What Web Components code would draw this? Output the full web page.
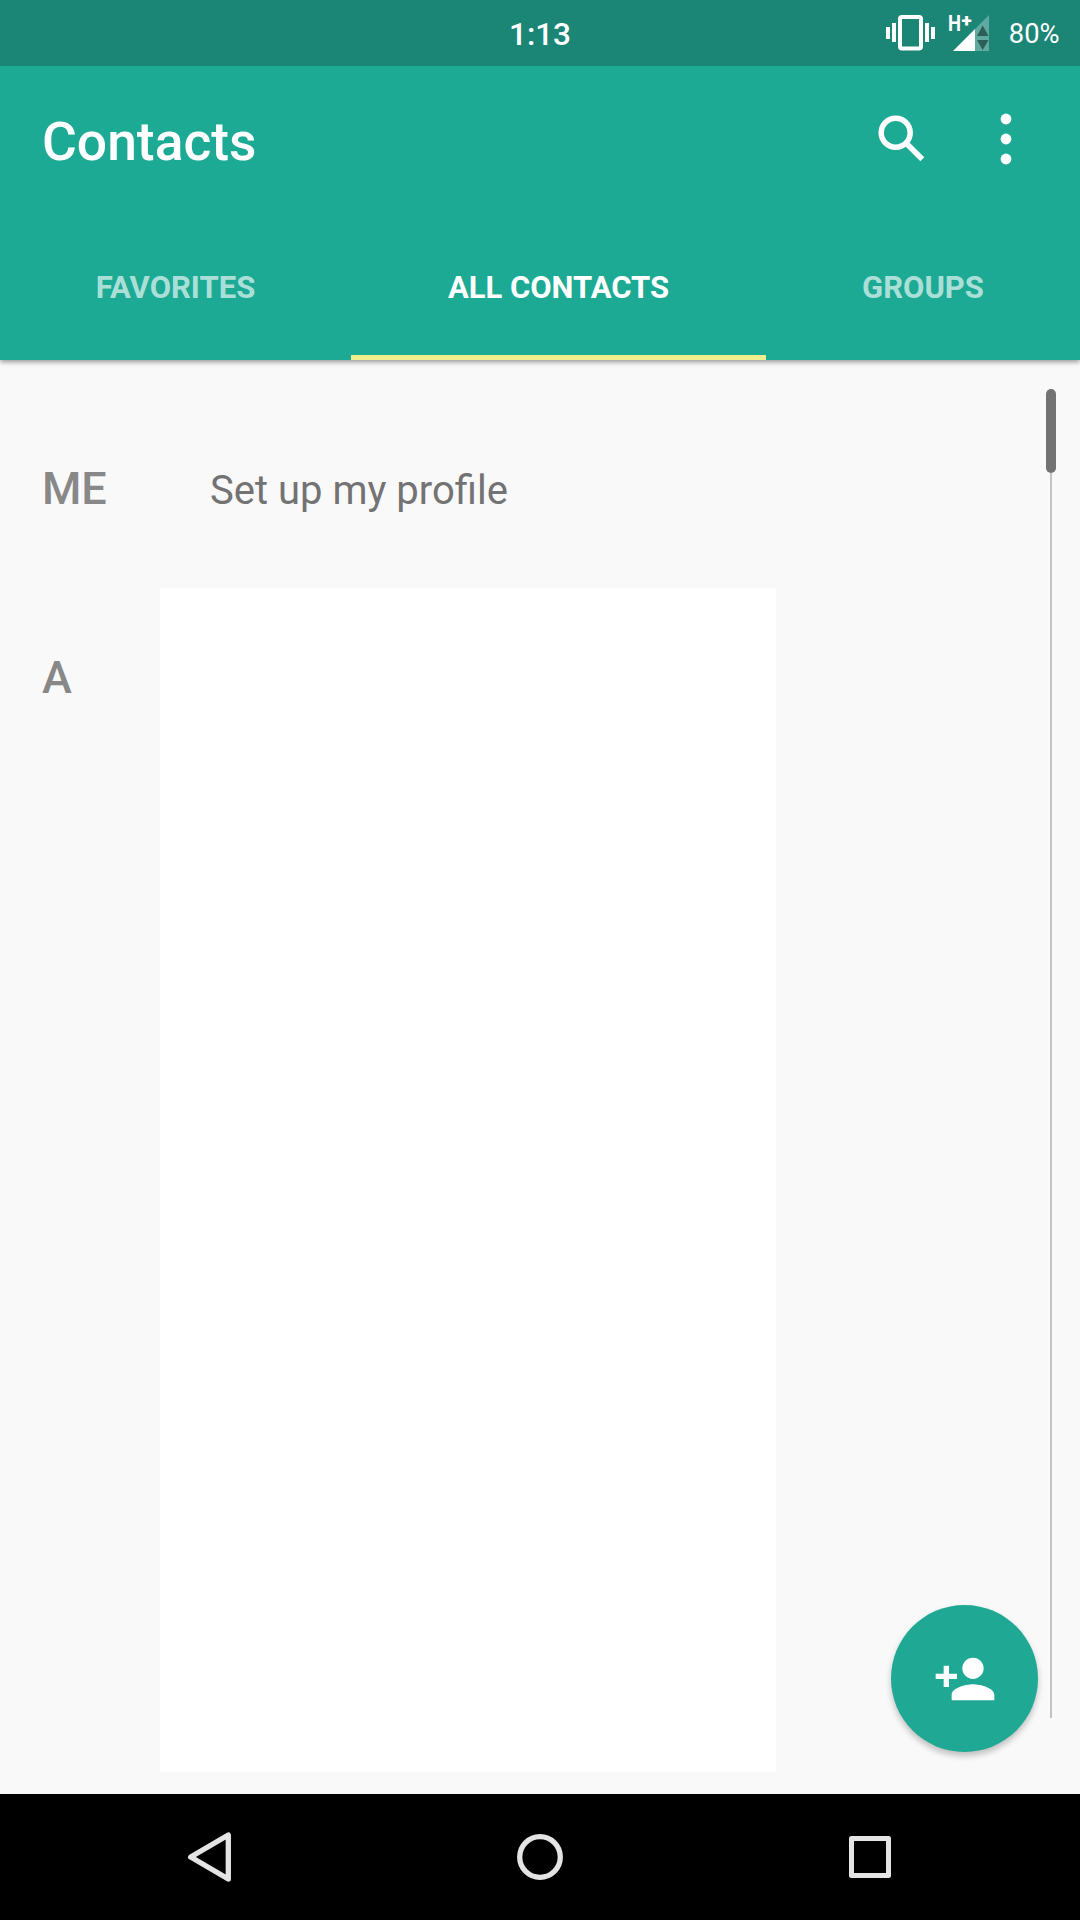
<!DOCTYPE html>
<html lang="en">
<head>
<meta charset="utf-8">
<title>Contacts</title>
<style>
  html, body {
    margin: 0;
    height: 100%;
  }

  body {
    font-family: Roboto, "Liberation Sans", sans-serif;
    background: #f9f9f9;
    overflow: hidden;
  }
</style>
</head>
<body>
<contacts-app>
  <status-bar slot="status" time="1:13" battery="80%"></status-bar>
  <app-header slot="header" heading="Contacts">
    <app-tab style="width: 351px">FAVORITES</app-tab>
    <app-tab style="width: 415px" selected>ALL CONTACTS</app-tab>
    <app-tab style="width: 314px">GROUPS</app-tab>
  </app-header>
  <contact-section label="ME" style="height: 190px; --label-top: 68px">
    <contact-row>Set up my profile</contact-row>
  </contact-section>
  <contact-section label="A" style="height: 1184px; --label-top: 67px">
    <contact-panel></contact-panel>
  </contact-section>
  <fast-scroller slot="overlay"></fast-scroller>
  <add-button slot="overlay"></add-button>
  <nav-bar slot="nav"></nav-bar>
</contacts-app>

<script>
class BaseElement extends HTMLElement {
  constructor() {
    super();
    this.attachShadow({ mode: "open" });
  }

  connectedCallback() {
    this.shadowRoot.innerHTML = this.render();
  }
}

class ContactsApp extends BaseElement {
  render() {
    return `
      <style>
        :host {
          display: flex;
          flex-direction: column;
          width: 1080px;
          height: 1920px;
        }

        main {
          position: relative;
          flex: 1;
          box-sizing: border-box;
          padding-top: 38px;
          background: #f9f9f9;
        }
      </style>
      <slot name="status"></slot>
      <slot name="header"></slot>
      <main>
        <slot></slot>
        <slot name="overlay"></slot>
      </main>
      <slot name="nav"></slot>
    `;
  }
}

class StatusBar extends BaseElement {
  render() {
    return `
      <style>
        :host {
          display: grid;
          grid-template-columns: 1fr auto 1fr;
          height: 66px;
          background: #1b8576;
          color: #fff;
        }

        .time {
          grid-column: 2;
          font-size: 31.5px;
          font-weight: 500;
          line-height: 69px;
        }

        .icons {
          display: flex;
          justify-content: flex-end;
          padding-right: 20.5px;
        }

        .battery {
          margin-left: 18px;
          font-size: 27.3px;
          line-height: 69px;
        }
      </style>
      <span class="time">${this.getAttribute("time")}</span>
      <div class="icons">
        <svg width="106" height="66" viewBox="885 0 106 66">
          <rect x="900" y="17" width="21" height="31.5" rx="2" fill="none" stroke="#fff" stroke-width="4"/>
          <path fill="#fff" d="M886 27h4v12h-4zM892 23h4v19h-4zM925 23h4v19h-4zM931 27h4v12h-4z"/>
          <text x="948" y="31.3" fill="#fff" font-size="22" font-weight="700" textLength="13" lengthAdjust="spacingAndGlyphs">H</text>
          <text x="961.5" y="27" fill="#fff" font-size="19" font-weight="900">+</text>
          <path fill="#fff" d="M953 51l22-22v22z"/>
          <path fill="#fff" fill-opacity=".3" d="M975 51V29l14-14v36z"/>
          <path fill="#2b5f57" d="M977 36l5.7-10.5 5.8 10.5zM977 40h11.5l-5.8 10z"/>
        </svg>
        <span class="battery">${this.getAttribute("battery")}</span>
      </div>
    `;
  }
}

class AppHeader extends BaseElement {
  render() {
    return `
      <style>
        :host {
          display: flex;
          flex-direction: column;
          position: relative;
          z-index: 1;
          height: 294px;
          background: #1caa94;
          color: #fff;
          box-shadow: 0 2px 5px rgba(0, 0, 0, .4);
          /* keeps the shadow off the status bar */
          clip-path: inset(0 0 -10px);
        }

        .bar {
          display: flex;
          align-items: center;
          height: 148px;
          padding: 0 44px 0 42px;
        }

        h1 {
          flex: 1;
          margin: 4px 0 0;
          font-size: 53.4px;
          font-weight: 500;
          line-height: 1;
        }

        nav {
          display: flex;
          flex: 1;
        }
      </style>
      <div class="bar">
        <h1>${this.getAttribute("heading")}</h1>
        <svg width="160" height="60" viewBox="876 110 160 60" fill="none" stroke="#fff">
          <circle cx="895.7" cy="132.7" r="14.5" stroke-width="5.5"/>
          <path stroke-width="5.5" d="M907.5 144.5l14.8 14.8"/>
          <g fill="#fff" stroke="none">
            <circle cx="1006" cy="119" r="5.4"/>
            <circle cx="1006" cy="139" r="5.4"/>
            <circle cx="1006" cy="159" r="5.4"/>
          </g>
        </svg>
      </div>
      <nav><slot></slot></nav>
    `;
  }
}

class AppTab extends BaseElement {
  render() {
    return `
      <style>
        :host {
          display: flex;
          justify-content: center;
          box-sizing: border-box;
          padding-top: 56px;
          font-size: 31px;
          font-weight: 700;
          line-height: 36px;
          color: rgba(255, 255, 255, .65);
          border-bottom: 5px solid transparent;
        }

        :host([selected]) {
          color: #fff;
          border-color: #efef8e;
        }
      </style>
      <slot></slot>
    `;
  }
}

class ContactSection extends BaseElement {
  render() {
    return `
      <style>
        :host {
          display: flex;
        }

        .label {
          box-sizing: border-box;
          width: 160px;
          padding: var(--label-top) 0 0 42px;
          font-size: 45px;
          font-weight: 500;
          line-height: 1;
          color: #888;
        }
      </style>
      <div class="label">${this.getAttribute("label")}</div>
      <slot></slot>
    `;
  }
}

class ContactRow extends BaseElement {
  render() {
    return `
      <style>
        :host {
          display: block;
          padding: 69px 0 0 50px;
          font-size: 40px;
          line-height: 48px;
          color: #737373;
        }
      </style>
      <slot></slot>
    `;
  }
}

class ContactPanel extends BaseElement {
  render() {
    return `
      <style>
        :host {
          display: block;
          width: 616px;
          background: #fff;
        }
      </style>
      <slot></slot>
    `;
  }
}

class FastScroller extends BaseElement {
  render() {
    return `
      <style>
        :host {
          display: flex;
          flex-direction: column;
          align-items: center;
          position: absolute;
          top: 29px;
          right: 24px;
          width: 10px;
          height: 1329px;
        }

        .thumb {
          width: 10px;
          height: 84px;
          border-radius: 5px;
          background: #737373;
        }

        .track {
          flex: 1;
          width: 2px;
          background: #c3c3c3;
        }
      </style>
      <div class="thumb"></div>
      <div class="track"></div>
    `;
  }
}

class AddButton extends BaseElement {
  render() {
    return `
      <style>
        :host {
          display: flex;
          align-items: center;
          justify-content: center;
          position: absolute;
          right: 42px;
          bottom: 42px;
          width: 147px;
          height: 147px;
          border-radius: 50%;
          background: #1fa893;
          box-shadow: 0 4px 6px rgba(0, 0, 0, .24);
        }
      </style>
      <svg width="64" height="64" viewBox="0 0 24 24" fill="#fff">
        <path d="M15 12c2.21 0 4-1.79 4-4s-1.79-4-4-4-4 1.79-4 4 1.79 4 4 4zm-9-2V7H4v3H1v2h3v3h2v-3h3v-2H6zm9 4c-2.67 0-8 1.34-8 4v2h16v-2c0-2.66-5.33-4-8-4z"/>
      </svg>
    `;
  }
}

class NavBar extends BaseElement {
  render() {
    return `
      <style>
        :host {
          display: flex;
          align-items: center;
          justify-content: space-between;
          box-sizing: border-box;
          height: 126px;
          padding: 0 180px;
          background: #000;
        }

        svg {
          width: 60px;
          height: 60px;
          fill: none;
          stroke: #e4e4e4;
          stroke-width: 5.3;
          stroke-linejoin: round;
        }
      </style>
      <svg><path d="M10.7 30L48.3 8v44z"/></svg>
      <svg><circle cx="30" cy="30" r="20.3"/></svg>
      <svg><rect x="11.5" y="11.5" width="37" height="37" stroke-width="5"/></svg>
    `;
  }
}

customElements.define("contacts-app", ContactsApp);
customElements.define("status-bar", StatusBar);
customElements.define("app-header", AppHeader);
customElements.define("app-tab", AppTab);
customElements.define("contact-section", ContactSection);
customElements.define("contact-row", ContactRow);
customElements.define("contact-panel", ContactPanel);
customElements.define("fast-scroller", FastScroller);
customElements.define("add-button", AddButton);
customElements.define("nav-bar", NavBar);
</script>
</body>
</html>
